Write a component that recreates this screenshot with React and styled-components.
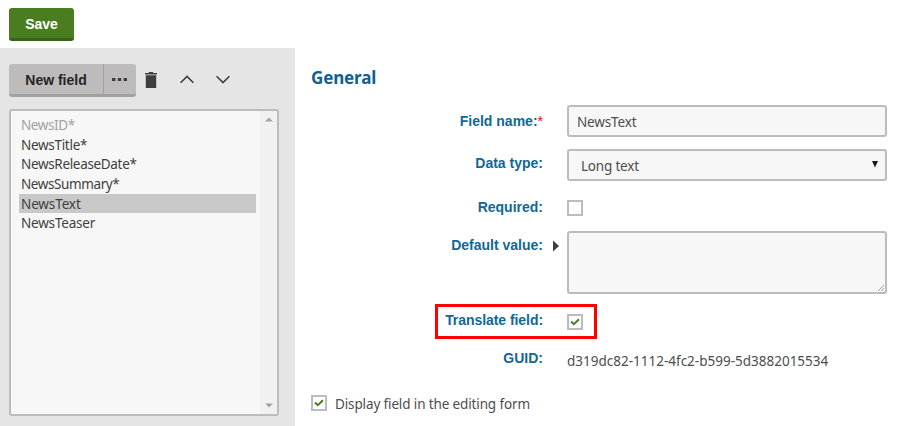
import React from 'react';
import styled, { createGlobalStyle, css } from 'styled-components';

const GlobalStyle = createGlobalStyle`
  * { box-sizing: border-box; }
  body { margin: 0; background: #fff; overflow: hidden; }
`;

const body = css`
  font-family: 'Noto Sans', 'Open Sans', sans-serif;
  font-size: 13.5px;
  letter-spacing: ${(p) => p.$track || 0}px;
  color: #4d4d4d;
  white-space: nowrap;
`;

const bold = css`
  font-family: 'Liberation Sans', Arial, sans-serif;
  font-weight: 700;
  font-size: 14px;
  white-space: nowrap;
`;

const Page = styled.div`
  display: flex;
  flex-direction: column;
  width: 898px;
  height: 426px;
  overflow: hidden;
`;

const Toolbar = styled.header`
  height: 48px;
  padding: 8px 9px 0;
`;

const SaveButton = styled.button`
  ${bold}
  display: block;
  width: 65px;
  height: 33px;
  padding: 2px 0 0;
  border: 0;
  border-bottom: 3px solid #38611a;
  border-radius: 3px;
  background: #497d1f;
  color: #fff;
`;

const Columns = styled.div`
  display: flex;
  flex: 1;
`;

const Sidebar = styled.aside`
  width: 295px;
  height: 378px;
  padding: 16px 16px 0 9px;
  background: #e5e5e5;
`;

const Actions = styled.div`
  display: flex;
  align-items: center;
  height: 33px;
`;

const SplitButton = styled.div`
  display: flex;
  width: 127px;
  height: 33px;
  border-bottom: 3px solid #a3a2a2;
  border-radius: 3px;
  background: #bdbbbb;
  overflow: hidden;
`;

const SplitPart = styled.button`
  ${bold}
  display: flex;
  align-items: center;
  justify-content: center;
  width: ${(p) => p.$width}px;
  padding: ${(p) => (p.$divided ? '0 2px 0 0' : '2px 0 0')};
  border: 0;
  border-left: ${(p) => (p.$divided ? '1px solid #a3a2a2' : '0')};
  background: transparent;
  color: #262524;
`;

const IconButton = styled.button`
  display: flex;
  align-items: center;
  justify-content: center;
  width: 36px;
  height: 28px;
  margin: 0 0 2px ${(p) => p.$offset || 0}px;
  padding: 0;
  border: 0;
  background: transparent;
  color: #403e3d;
`;

const ListBox = styled.div`
  display: flex;
  width: 270px;
  height: 307px;
  margin-top: 12px;
  border: 2px solid #bdbbbb;
  border-radius: 3px;
  background: #f7f7f7;
`;

const Options = styled.ul`
  flex: 1;
  margin: 0;
  padding: 4px 4px 0 8px;
  list-style: none;
`;

const Option = styled.li`
  ${body}
  height: 19.7px;
  padding-left: 2px;
  line-height: 21.5px;
  color: ${(p) => (p.$muted ? '#a3a2a2' : '#403e3d')};
  background: ${(p) => (p.$selected ? '#c8c8c8' : 'transparent')};
`;

const Scrollbar = styled.div`
  display: flex;
  flex-direction: column;
  align-items: center;
  justify-content: space-between;
  width: 17px;
  padding: 6px 0 6px;
  background: #f1f1f1;
`;

const Main = styled.main`
  flex: 1;
  padding: 18px 11px 0 16px;
`;

const Heading = styled.h1`
  height: 39px;
  margin: 0;
  font: 700 17px/24px 'Noto Sans', 'Open Sans', sans-serif;
  letter-spacing: ${(p) => p.$track}px;
  color: #0f6194;
`;

const Field = styled.div`
  position: relative;
  display: grid;
  grid-template-columns: 232px 24px 320px;
  align-items: start;
  height: ${(p) => p.$height}px;
`;

const Label = styled.div`
  ${bold}
  margin-top: ${(p) => p.$top}px;
  line-height: 16px;
  letter-spacing: ${(p) => p.$track || 0}px;
  text-align: right;
  color: #0f6896;
`;

const Star = styled.span`
  color: #f00;
  font-weight: 400;
`;

const Marker = styled.div`
  display: flex;
  padding: 9px 0 0 10px;
`;

const Control = styled.div`
  ${body}
  display: flex;
  align-items: center;
  justify-content: space-between;
  height: 32px;
  padding: 2px 7px 0 ${(p) => p.$inset}px;
  border: 2px solid #bdbbbb;
  border-radius: 3px;
  background: #f7f7f7;
`;

const DropArrow = styled.svg`
  margin-bottom: 4px;
`;

const Area = styled.div`
  display: flex;
  align-items: flex-end;
  justify-content: flex-end;
  height: 63px;
  border: 2px solid #bdbbbb;
  border-radius: 3px;
  background: #f7f7f7;
`;

const Box = styled.span`
  display: flex;
  align-items: center;
  justify-content: center;
  width: 16px;
  height: 16px;
  margin-top: ${(p) => p.$top || 0}px;
  border: 2px solid #bdbbbb;
  background: #fff;
`;

const Value = styled.div`
  ${body}
  padding-top: ${(p) => p.$top}px;
  line-height: 20px;
`;

const CheckRow = styled.label`
  ${body}
  display: flex;
  align-items: center;
  gap: 8px;
  height: 20px;
`;

const CheckText = styled.span`
  padding-top: 2px;
`;

const Highlight = styled.div`
  position: absolute;
  left: 124px;
  top: -10px;
  width: 162px;
  height: 35px;
  border: 3px solid #f00;
`;

const Check = () => (
  <svg width="10" height="8" viewBox="0 0 10 8" fill="none" stroke="#497d1f" strokeWidth="2">
    <path d="M1 3.6 3.8 6.2 9 1.2" />
  </svg>
);

const ScrollArrow = ({ down }) => (
  <svg width="8" height="5" viewBox="0 0 8 5" fill="#a3a3a3">
    <path d={down ? 'M0 .5h8L4 4.5z' : 'M0 4.5h8L4 .5z'} />
  </svg>
);

const fields = [
  { name: 'NewsID*', muted: true, track: -0.4 },
  { name: 'NewsTitle*', track: -0.3 },
  { name: 'NewsReleaseDate*', track: -0.33 },
  { name: 'NewsSummary*', track: -0.4 },
  { name: 'NewsText', selected: true, track: -0.12 },
  { name: 'NewsTeaser', track: -0.2 },
];

export default function App() {
  return (
    <Page>
      <GlobalStyle />
      <Toolbar>
        <SaveButton>Save</SaveButton>
      </Toolbar>
      <Columns>
        <Sidebar>
          <Actions>
            <SplitButton>
              <SplitPart $width={94}>New field</SplitPart>
              <SplitPart $width={33} $divided aria-label="More">
                <svg width="15" height="3" viewBox="0 0 15 3" fill="#403e3d">
                  <path d="M0 0h3.4v3H0zM5.8 0h3.4v3H5.8zM11.6 0H15v3h-3.4z" />
                </svg>
              </SplitPart>
            </SplitButton>
            <IconButton $offset={-3} aria-label="Delete">
              <svg width="12" height="16" viewBox="0 0 12 16" fill="currentColor">
                <path d="M0 .9h3.5L4.2 0h3.6l.7.9H12v1.6H0zM.8 3.2h10.4V16H.8z" />
              </svg>
            </IconButton>
            <IconButton aria-label="Move up">
              <svg width="14" height="9" viewBox="0 0 14 9" fill="none" stroke="currentColor" strokeWidth="1.6">
                <path d="M.6 7.8 7 1.4l6.4 6.4" />
              </svg>
            </IconButton>
            <IconButton aria-label="Move down">
              <svg width="14" height="9" viewBox="0 0 14 9" fill="none" stroke="currentColor" strokeWidth="1.6">
                <path d="M.6 1.2 7 7.6l6.4-6.4" />
              </svg>
            </IconButton>
          </Actions>
          <ListBox>
            <Options>
              {fields.map((f) => (
                <Option key={f.name} $muted={f.muted} $selected={f.selected} $track={f.track}>
                  {f.name}
                </Option>
              ))}
            </Options>
            <Scrollbar>
              <ScrollArrow />
              <ScrollArrow down />
            </Scrollbar>
          </ListBox>
        </Sidebar>
        <Main>
          <Heading $track={-0.15}>General</Heading>
          <Field $height={44}>
            <Label $top={8}>Field name:<Star>*</Star></Label>
            <span />
            <Control $inset={8} $track={-0.15}>NewsText</Control>
          </Field>
          <Field $height={51}>
            <Label $top={6}>Data type:</Label>
            <span />
            <Control $inset={12} $track={-0.2}>
              Long text
              <DropArrow width="6" height="7" viewBox="0 0 6 7" fill="#1a1a1a">
                <path d="M0 0h6L3 6.5z" />
              </DropArrow>
            </Control>
          </Field>
          <Field $height={31}>
            <Label $top={-1}>Required:</Label>
            <span />
            <Box />
          </Field>
          <Field $height={83}>
            <Label $top={6}>Default value:</Label>
            <Marker>
              <svg width="6" height="12" viewBox="0 0 6 12" fill="#403e3d">
                <path d="M0 .5 6 6 0 11.5z" />
              </svg>
            </Marker>
            <Area>
              <svg width="8" height="8" viewBox="0 0 8 8" stroke="#8c8c8c" strokeWidth=".8">
                <path d="M1 7 7 1M4 7l3-3" />
              </svg>
            </Area>
          </Field>
          <Field $height={36}>
            <Label $top={-2} $track={-0.06}>Translate field:</Label>
            <span />
            <Box><Check /></Box>
            <Highlight />
          </Field>
          <Field $height={43}>
            <Label $top={0}>GUID:</Label>
            <span />
            <Value $top={1}>d319dc82-1112-4fc2-b599-5d3882015534</Value>
          </Field>
          <CheckRow $track={-0.13}>
            <Box><Check /></Box>
            <CheckText>Display field in the editing form</CheckText>
          </CheckRow>
        </Main>
      </Columns>
    </Page>
  );
}
